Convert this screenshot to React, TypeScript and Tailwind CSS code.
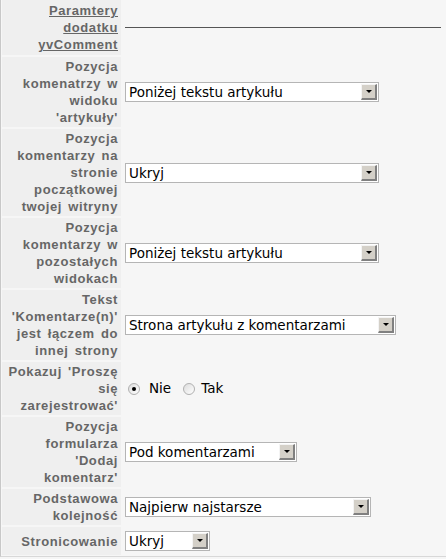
import React from 'react';

const labelCls =
  'w-[119px] shrink-0 bg-[#efefef] text-right pr-[3px] py-px text-[13px] leading-[17px] font-bold tracking-[0.6px] [word-spacing:2px] text-[#666666] flex flex-col justify-center';

const FakeSelect = ({ value, width }: { value: string; width: number }) => (
  <div
    className="h-[20px] flex items-stretch bg-white border border-[#b5b5b5]"
    style={{ width }}
  >
    <div className="flex-1 pl-[3px] text-[13.5px] leading-[18px] text-black whitespace-nowrap overflow-hidden font-['DejaVu_Sans',sans-serif]">
      {value}
    </div>
    <div className="w-[16px] m-px bg-[#d4d0c8] border-t border-l border-t-[#f4f4f4] border-l-[#f4f4f4] border-r-2 border-b-2 border-r-[#808080] border-b-[#808080] flex items-center justify-center">
      <div className="w-0 h-0 border-l-[3px] border-r-[3px] border-t-[3px] border-l-transparent border-r-transparent border-t-black" />
    </div>
  </div>
);

const Radio = ({ checked }: { checked?: boolean }) => (
  <span className="w-[12px] h-[12px] rounded-full border border-[#b0b0b0] bg-gradient-to-br from-[#dcdcdc] to-white flex items-center justify-center">
    {checked && <span className="w-[4px] h-[4px] rounded-full bg-black" />}
  </span>
);

const Row = ({ label, children }: { label: React.ReactNode; children: React.ReactNode }) => (
  <div className="flex">
    <div className={labelCls}>{label}</div>
    <div className="flex-1 flex items-center pl-[4px] py-[4px]">{children}</div>
  </div>
);

export default function App() {
  return (
    <div className="w-[446px] h-[559px] bg-[#f6f6f6] font-['Liberation_Sans',Arial,sans-serif]">
      <div className="border-l border-[#c8c8c8] pl-px flex flex-col gap-[2px] pb-px border-b border-b-[#d8d8d8]">
        <div className="flex">
          <div className={labelCls + ' h-[55px]'}>
            <span className="underline">Paramtery</span>
            <span className="underline">dodatku</span>
            <span className="underline">yvComment</span>
          </div>
          <div className="flex-1 flex items-center pl-[4px] pr-[5px]">
            <div className="w-full h-px bg-[#555555]" />
          </div>
        </div>

        <Row label={<>Pozycja<br />komenatrzy w<br />widoku<br />'artykuły'</>}>
          <FakeSelect value="Poniżej tekstu artykułu" width={254} />
        </Row>

        <Row label={<>Pozycja<br />komentarzy na<br />stronie<br />początkowej<br />twojej witryny</>}>
          <FakeSelect value="Ukryj" width={254} />
        </Row>

        <Row label={<>Pozycja<br />komentarzy w<br />pozostałych<br />widokach</>}>
          <FakeSelect value="Poniżej tekstu artykułu" width={254} />
        </Row>

        <Row label={<>Tekst<br />'Komentarze(n)'<br />jest łączem do<br />innej strony</>}>
          <FakeSelect value="Strona artykułu z komentarzami" width={271} />
        </Row>

        <Row label={<>Pokazuj 'Proszę<br />się<br />zarejestrować'</>}>
          <div className="flex items-center text-[13.5px] text-black font-['DejaVu_Sans',sans-serif] pl-[3px]">
            <Radio checked />
            <span className="ml-[9px]">Nie</span>
            <span className="ml-[12px]">
              <Radio />
            </span>
            <span className="ml-[6px]">Tak</span>
          </div>
        </Row>

        <Row label={<>Pozycja<br />formularza<br />'Dodaj<br />komentarz'</>}>
          <FakeSelect value="Pod komentarzami" width={172} />
        </Row>

        <Row label={<>Podstawowa<br />kolejność</>}>
          <FakeSelect value="Najpierw najstarsze" width={246} />
        </Row>

        <Row label={<>Stronicowanie</>}>
          <FakeSelect value="Ukryj" width={85} />
        </Row>
      </div>
    </div>
  );
}
